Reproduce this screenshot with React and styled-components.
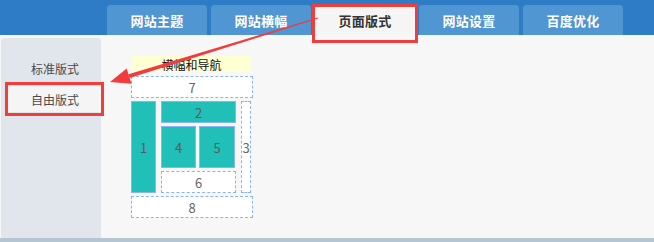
import React from 'react';
import styled, { createGlobalStyle } from 'styled-components';

const GlobalStyle = createGlobalStyle`
  html, body {
    margin: 0;
    padding: 0;
    background: #f7f7f7;
  }
  body {
    font-family: 'Noto Sans CJK SC', 'Noto Sans', sans-serif;
  }
`;

const tabs = ['网站主题', '网站横幅', '页面版式', '网站设置', '百度优化'];

const App = () => {
  return (
    <Page>
      <GlobalStyle />
      <TopBar>
        {tabs.map((t) => (
          <Tab key={t} active={t === '页面版式'}>{t}</Tab>
        ))}
      </TopBar>

      <Body>
        <Sidebar>
          <SideItem>标准版式</SideItem>
          <SideItem active>自由版式</SideItem>
        </Sidebar>

        <Main>
          <Diagram>
            <Banner>横幅和导航</Banner>
            <Slot>7</Slot>
            <MiddleRow>
              <Block tall width={25}>1</Block>
              <CenterCol>
                <Block height={22}>2</Block>
                <Pair>
                  <Block width={35} height={42}>4</Block>
                  <Block width={36} height={42}>5</Block>
                </Pair>
                <Slot>6</Slot>
              </CenterCol>
              <Slot narrow>3</Slot>
            </MiddleRow>
            <Slot>8</Slot>
          </Diagram>
        </Main>
      </Body>

      <Annotations width="654" height="242" viewBox="0 0 654 242">
        <rect x="313.5" y="5.5" width="103" height="36" fill="none" stroke="#f23d3d" strokeWidth="3" />
        <rect x="6.5" y="83.5" width="96" height="31" fill="none" stroke="#f23d3d" strokeWidth="3" />
        <polygon points="318.2,18.5 317.8,17.5 128.5,74.2 129.7,78.0" fill="#f03c3c" />
        <polygon points="110,82 126.7,68.4 131.5,83.7" fill="#f03c3c" />
      </Annotations>
    </Page>
  );
};

const Page = styled.div`
  position: relative;
  width: 654px;
  height: 242px;
  display: flex;
  flex-direction: column;
  overflow: hidden;
`;

const TopBar = styled.div`
  height: 35px;
  background: #2e7cc5;
  display: flex;
  align-items: flex-end;
  gap: 4px;
  padding-left: 107px;
  box-sizing: border-box;
`;

const Tab = styled.div`
  width: 100px;
  height: ${props => (props.active ? '32px' : '30px')};
  margin-bottom: ${props => (props.active ? '-1px' : '0')};
  border-radius: 3px 3px 0 0;
  background: ${props => (props.active ? '#f5f5f5' : '#5096d2')};
  color: ${props => (props.active ? '#333333' : '#ffffff')};
  font-size: 13px;
  font-weight: 700;
  display: flex;
  align-items: center;
  justify-content: center;
  letter-spacing: 0.3px;
`;

const Body = styled.div`
  flex: 1;
  display: flex;
  background: #f7f7f7;
  border-bottom: 4px solid #b5c5d2;
  padding-top: 3px;
`;

const Sidebar = styled.div`
  width: 100px;
  margin-left: 1px;
  background: #e1e5ec;
  border-radius: 4px 4px 0 0;
  padding-top: 17px;
  display: flex;
  flex-direction: column;
  gap: 5px;
  box-sizing: border-box;
`;

const SideItem = styled.div`
  height: 26px;
  margin-left: 4px;
  padding-left: 26px;
  display: flex;
  align-items: center;
  font-size: 12px;
  color: #4a4a4a;
  background: ${props => (props.active ? '#f5f5f5' : 'transparent')};
`;

const Main = styled.div`
  flex: 1;
  padding: 18px 0 0 30px;
`;

const Diagram = styled.div`
  width: 122px;
  display: flex;
  flex-direction: column;
  gap: 3px;
  font-size: 13px;
  color: #666;
`;

const Banner = styled.div`
  height: 16px;
  margin: 0 2px 1px 1px;
  background: #ffffd4;
  color: #111;
  display: flex;
  align-items: center;
  justify-content: center;
  font-size: 12px;
`;

const Slot = styled.div`
  box-sizing: border-box;
  height: ${props => (props.narrow ? 'auto' : '22px')};
  width: ${props => (props.narrow ? '10px' : 'auto')};
  background: #ffffff;
  border: 1px dashed #8cb3f5;
  display: flex;
  align-items: center;
  justify-content: center;
  line-height: 1;
`;

const MiddleRow = styled.div`
  display: flex;
  gap: 5px;
  height: 92px;
`;

const CenterCol = styled.div`
  width: 75px;
  display: flex;
  flex-direction: column;
  gap: 3px;
`;

const Pair = styled.div`
  display: flex;
  gap: 3px;
`;

const Block = styled.div`
  box-sizing: border-box;
  width: ${props => (props.width ? props.width + 'px' : 'auto')};
  height: ${props => (props.tall ? 'auto' : props.height + 'px')};
  background: #20bfb8;
  border: 1px solid #8cb3f5;
  display: flex;
  align-items: center;
  justify-content: center;
  line-height: 1;
  color: #5a5a5a;
`;

const Annotations = styled.svg`
  position: absolute;
  left: 0;
  top: 0;
  pointer-events: none;
`;

export default App;
